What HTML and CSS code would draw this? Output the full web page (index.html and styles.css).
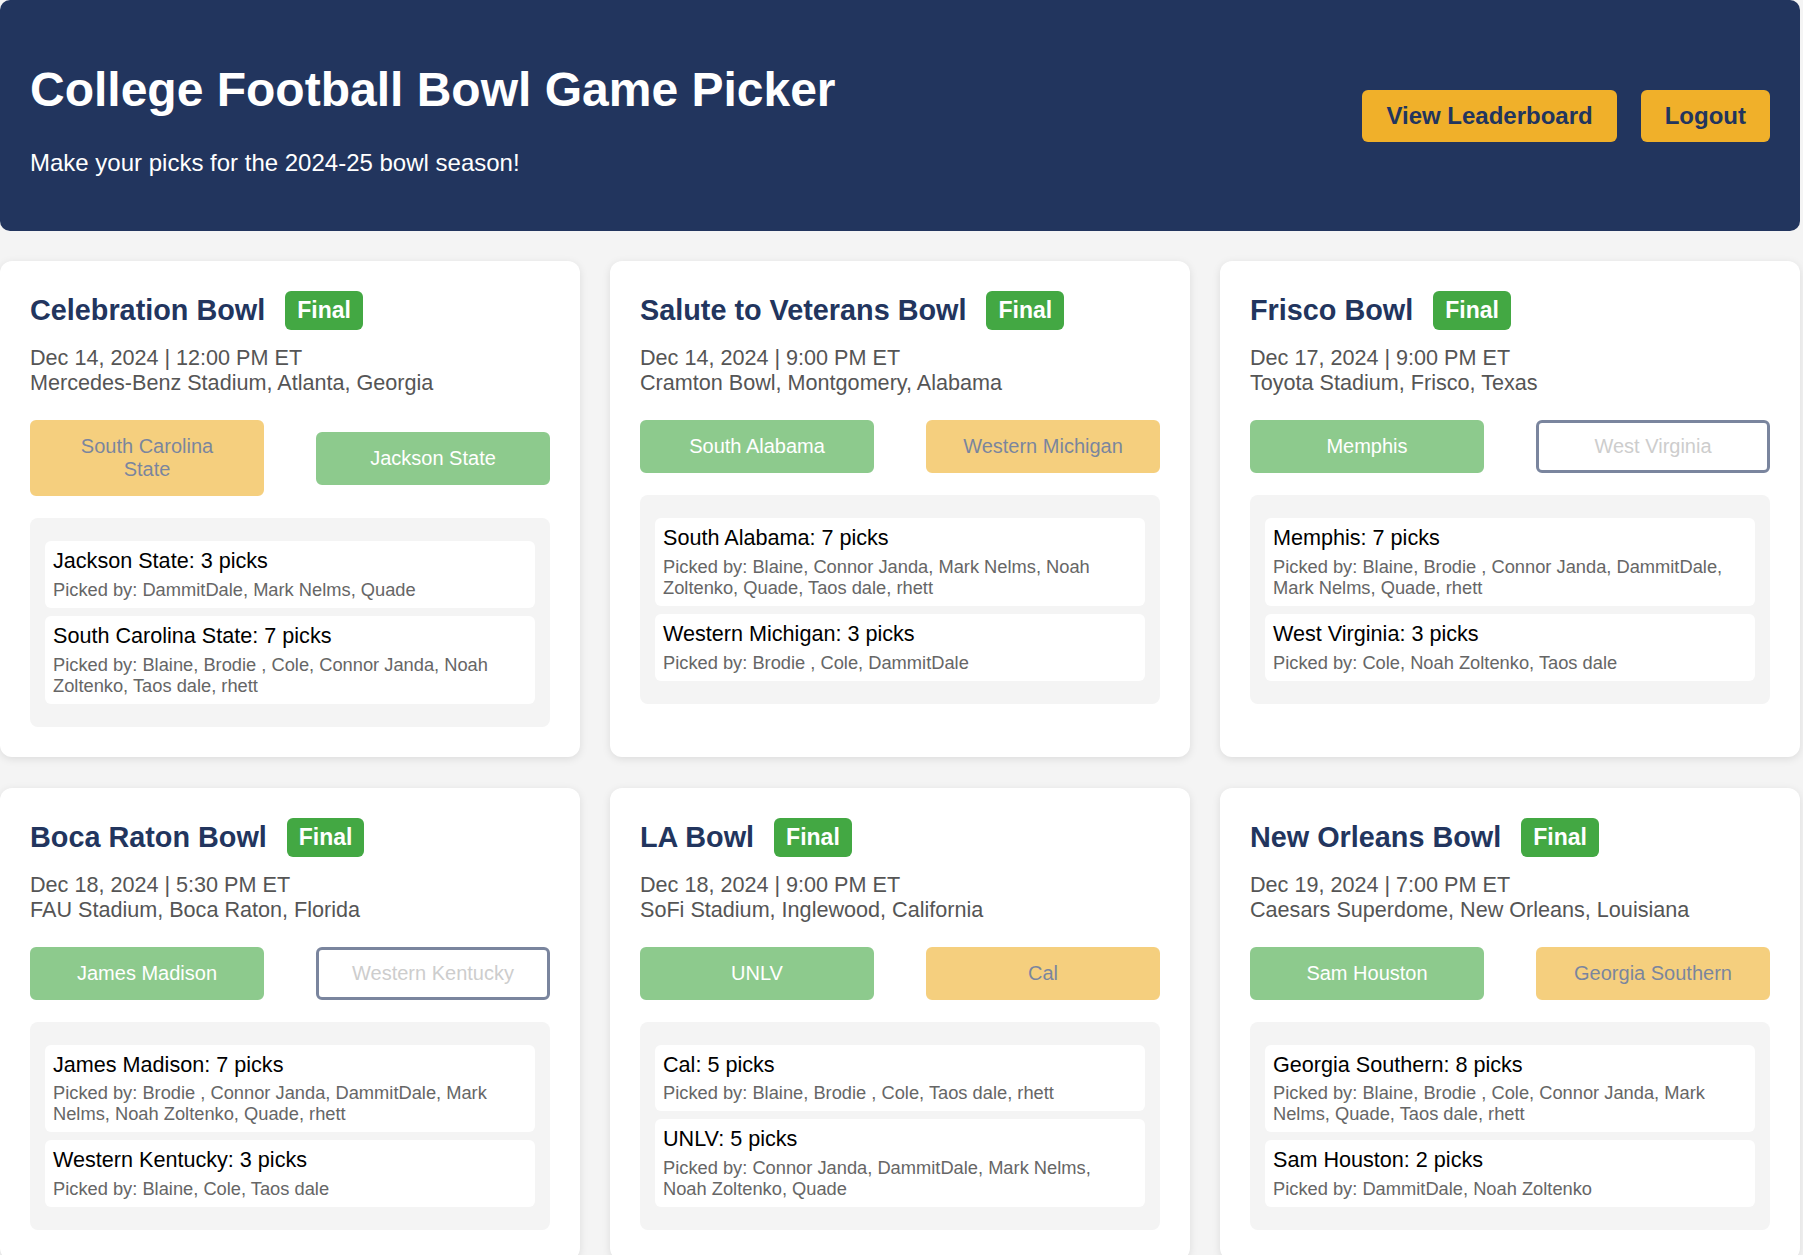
FILE: index.html
```html
<!DOCTYPE html>
<html lang="en">
<head>
<meta charset="utf-8">
<title>College Football Bowl Game Picker</title>
<link rel="stylesheet" href="styles.css">
</head>
<body>
<div class="page">
  <header class="site-header">
    <div class="header-text">
      <h1>College Football Bowl Game Picker</h1>
      <p>Make your picks for the 2024-25 bowl season!</p>
    </div>
    <div class="header-actions">
      <button class="header-btn">View Leaderboard</button>
      <button class="header-btn">Logout</button>
    </div>
  </header>

  <main class="games">
    <section class="card">
      <div class="card-head"><h2>Celebration Bowl</h2><span class="badge">Final</span></div>
      <div class="meta">Dec 14, 2024 | 12:00 PM ET<br>Mercedes-Benz Stadium, Atlanta, Georgia</div>
      <div class="teams">
        <button class="team gold">South Carolina State</button>
        <button class="team green">Jackson State</button>
      </div>
      <div class="picks">
        <div class="pick"><div class="pick-count">Jackson State: 3 picks</div><div class="pick-names">Picked by: DammitDale, Mark Nelms, Quade</div></div>
        <div class="pick"><div class="pick-count">South Carolina State: 7 picks</div><div class="pick-names">Picked by: Blaine, Brodie , Cole, Connor Janda, Noah Zoltenko, Taos dale, rhett</div></div>
      </div>
    </section>

    <section class="card">
      <div class="card-head"><h2>Salute to Veterans Bowl</h2><span class="badge">Final</span></div>
      <div class="meta">Dec 14, 2024 | 9:00 PM ET<br>Cramton Bowl, Montgomery, Alabama</div>
      <div class="teams">
        <button class="team green">South Alabama</button>
        <button class="team gold">Western Michigan</button>
      </div>
      <div class="picks">
        <div class="pick"><div class="pick-count">South Alabama: 7 picks</div><div class="pick-names">Picked by: Blaine, Connor Janda, Mark Nelms, Noah Zoltenko, Quade, Taos dale, rhett</div></div>
        <div class="pick"><div class="pick-count">Western Michigan: 3 picks</div><div class="pick-names">Picked by: Brodie , Cole, DammitDale</div></div>
      </div>
    </section>

    <section class="card">
      <div class="card-head"><h2>Frisco Bowl</h2><span class="badge">Final</span></div>
      <div class="meta">Dec 17, 2024 | 9:00 PM ET<br>Toyota Stadium, Frisco, Texas</div>
      <div class="teams">
        <button class="team green">Memphis</button>
        <button class="team plain">West Virginia</button>
      </div>
      <div class="picks">
        <div class="pick"><div class="pick-count">Memphis: 7 picks</div><div class="pick-names">Picked by: Blaine, Brodie , Connor Janda, DammitDale, Mark Nelms, Quade, rhett</div></div>
        <div class="pick"><div class="pick-count">West Virginia: 3 picks</div><div class="pick-names">Picked by: Cole, Noah Zoltenko, Taos dale</div></div>
      </div>
    </section>

    <section class="card">
      <div class="card-head"><h2>Boca Raton Bowl</h2><span class="badge">Final</span></div>
      <div class="meta">Dec 18, 2024 | 5:30 PM ET<br>FAU Stadium, Boca Raton, Florida</div>
      <div class="teams">
        <button class="team green">James Madison</button>
        <button class="team plain">Western Kentucky</button>
      </div>
      <div class="picks">
        <div class="pick"><div class="pick-count">James Madison: 7 picks</div><div class="pick-names">Picked by: Brodie , Connor Janda, DammitDale, Mark Nelms, Noah Zoltenko, Quade, rhett</div></div>
        <div class="pick"><div class="pick-count">Western Kentucky: 3 picks</div><div class="pick-names">Picked by: Blaine, Cole, Taos dale</div></div>
      </div>
    </section>

    <section class="card">
      <div class="card-head"><h2>LA Bowl</h2><span class="badge">Final</span></div>
      <div class="meta">Dec 18, 2024 | 9:00 PM ET<br>SoFi Stadium, Inglewood, California</div>
      <div class="teams">
        <button class="team green">UNLV</button>
        <button class="team gold">Cal</button>
      </div>
      <div class="picks">
        <div class="pick"><div class="pick-count">Cal: 5 picks</div><div class="pick-names">Picked by: Blaine, Brodie , Cole, Taos dale, rhett</div></div>
        <div class="pick"><div class="pick-count">UNLV: 5 picks</div><div class="pick-names">Picked by: Connor Janda, DammitDale, Mark Nelms, Noah Zoltenko, Quade</div></div>
      </div>
    </section>

    <section class="card">
      <div class="card-head"><h2>New Orleans Bowl</h2><span class="badge">Final</span></div>
      <div class="meta">Dec 19, 2024 | 7:00 PM ET<br>Caesars Superdome, New Orleans, Louisiana</div>
      <div class="teams">
        <button class="team green">Sam Houston</button>
        <button class="team gold">Georgia Southern</button>
      </div>
      <div class="picks">
        <div class="pick"><div class="pick-count">Georgia Southern: 8 picks</div><div class="pick-names">Picked by: Blaine, Brodie , Cole, Connor Janda, Mark Nelms, Quade, Taos dale, rhett</div></div>
        <div class="pick"><div class="pick-count">Sam Houston: 2 picks</div><div class="pick-names">Picked by: DammitDale, Noah Zoltenko</div></div>
      </div>
    </section>
  </main>
</div>
</body>
</html>
```

FILE: styles.css
```css
* { box-sizing: border-box; }

body {
  margin: 0;
  background: #f4f4f4;
  font-family: "Liberation Sans", Arial, sans-serif;
}

.page {
  width: 1800px;
}

.site-header {
  background: #22355e;
  color: #ffffff;
  border-radius: 10px;
  padding: 30px;
  display: flex;
  justify-content: space-between;
  align-items: center;
  margin-bottom: 30px;
}

.site-header h1 {
  font-size: 48px;
  font-weight: bold;
  margin: 32px 0;
}

.site-header p {
  font-size: 24px;
  margin: 24px 0;
}

.header-actions {
  display: flex;
  gap: 24px;
}

.header-btn {
  font-family: "Liberation Sans", Arial, sans-serif;
  font-size: 24px;
  font-weight: bold;
  color: #22355e;
  background: #f0b02a;
  border: none;
  border-radius: 6px;
  padding: 12px 24px;
  line-height: normal;
}

.games {
  display: grid;
  grid-template-columns: repeat(3, 580px);
  gap: 31px 30px;
}

.card {
  background: #ffffff;
  border-radius: 12px;
  padding: 30px;
  box-shadow: 0 2px 8px rgba(0, 0, 0, 0.1);
}

.card-head {
  display: flex;
  align-items: center;
}

.card-head h2 {
  margin: 0;
  font-size: 28.8px;
  font-weight: bold;
  color: #22355e;
}

.badge {
  margin-left: 20px;
  background: #43a843;
  color: #ffffff;
  font-weight: bold;
  font-size: 23px;
  line-height: 27px;
  padding: 6px 12px;
  border-radius: 6px;
}

.meta {
  margin: 15px 0 25px;
  font-size: 21.6px;
  line-height: 25px;
  color: #555555;
}

.teams {
  display: flex;
  justify-content: space-between;
  align-items: center;
  margin-bottom: 22px;
}

.team {
  width: 45%;
  font-family: "Liberation Sans", Arial, sans-serif;
  font-size: 20px;
  line-height: 23px;
  padding: 12px 24px;
  border: 3px solid transparent;
  border-radius: 6px;
  opacity: 0.6;
  text-align: center;
}

.team.gold {
  background: #f0b02a;
  border-color: #f0b02a;
  color: #22355e;
}

.team.green {
  background: #43a843;
  border-color: #43a843;
  color: #ffffff;
}

.team.plain {
  background: #ffffff;
  border-color: #22355e;
  color: #acacac;
}

.picks {
  background: #f4f4f4;
  border-radius: 8px;
  padding: 15px;
}

.pick {
  background: #ffffff;
  border-radius: 6px;
  padding: 8px;
  margin: 8px 0;
}

.pick-count {
  font-size: 21.6px;
  line-height: 24.8px;
  color: #000000;
}

.pick-names {
  margin-top: 5px;
  font-size: 18.3px;
  line-height: 21px;
  color: #666666;
}
```
